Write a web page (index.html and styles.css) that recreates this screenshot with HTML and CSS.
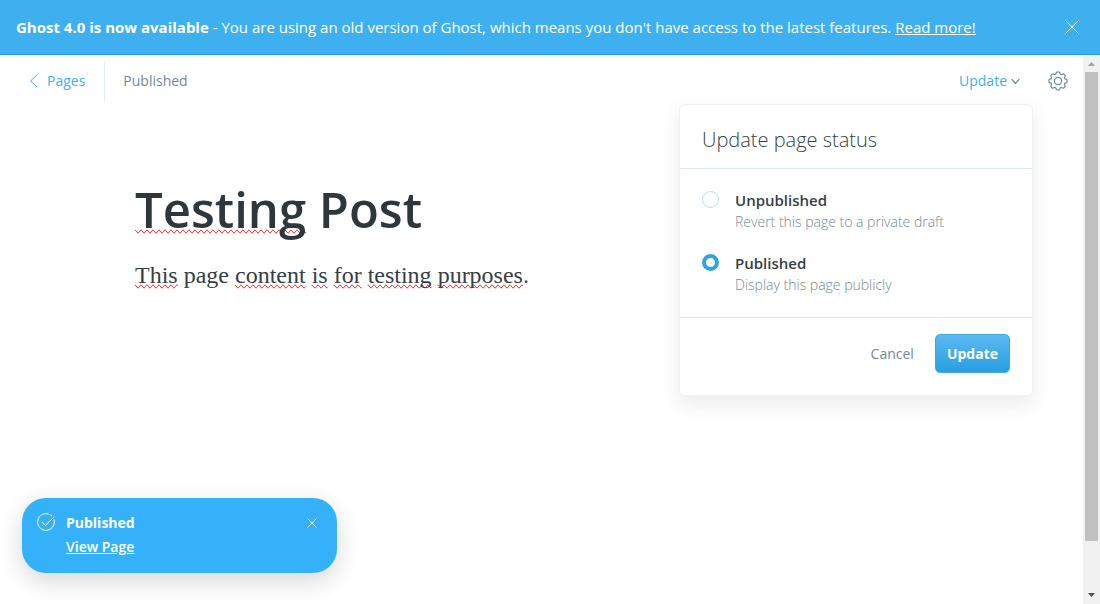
FILE: index.html
```
<!DOCTYPE html>
<html lang="en">
<head>
<meta charset="utf-8">
<meta name="viewport" content="width=device-width, initial-scale=1">
<title>Testing Post - Ghost</title>
<link rel="stylesheet" href="styles.css">
</head>
<body>
<aside class="banner">
  <p class="banner-text"><strong>Ghost 4.0 is now available</strong> - You are using an old version of Ghost, which means you don't have access to the latest features. <a href="#upgrade">Read more!</a></p>
  <button class="icon-button" type="button" aria-label="Dismiss">
    <svg width="14" height="14" viewBox="0 0 14 14" fill="none" stroke="currentColor" stroke-linecap="round"><path d="M.8.8l12.4 12.4M13.2.8L.8 13.2"/></svg>
  </button>
</aside>
<div class="workspace">
  <div class="editor">
    <header class="toolbar">
      <a class="back" href="#pages">
        <svg width="9" height="14" viewBox="0 0 9 14" fill="none" stroke="currentColor" stroke-linecap="round" stroke-linejoin="round"><path d="M8 1L1.5 7L8 13"/></svg>
        Pages
      </a>
      <span class="state">Published</span>
      <div class="publish">
        <button class="publish-toggle" type="button" aria-expanded="true">Update
          <svg width="9" height="7" viewBox="0 0 9 7" fill="none" stroke="#738a94" stroke-width="1.2" stroke-linecap="round" stroke-linejoin="round"><path d="M1 1.5l3.5 4L8 1.5"/></svg>
        </button>
        <form class="menu">
          <h2 class="menu-title">Update page status</h2>
          <div class="options">
            <label class="option">
              <input type="radio" name="status">
              <span><span class="option-name">Unpublished</span><span class="option-note">Revert this page to a private draft</span></span>
            </label>
            <label class="option">
              <input type="radio" name="status" checked>
              <span><span class="option-name">Published</span><span class="option-note">Display this page publicly</span></span>
            </label>
          </div>
          <footer class="menu-actions">
            <button class="cancel" type="button">Cancel</button>
            <button class="submit" type="button">Update</button>
          </footer>
        </form>
      </div>
      <button class="icon-button settings" type="button" aria-label="Settings">
        <svg width="20" height="20" viewBox="0 0 20 20" fill="none" stroke="currentColor" stroke-width="1.2" stroke-linejoin="round"><circle cx="10" cy="10" r="3.6"/><path d="M7.9 2.9L8.4 1.2Q10 .6 11.6 1.2L12.1 2.9Q12.7 3.8 13.6 3.5L15.2 2.7Q16.7 3.4 17.3 4.8L16.5 6.4Q16.2 7.3 17.1 7.9L18.8 8.4Q19.4 10 18.8 11.6L17.1 12.1Q16.2 12.7 16.5 13.6L17.3 15.2Q16.6 16.7 15.2 17.3L13.6 16.5Q12.7 16.2 12.1 17.1L11.6 18.8Q10 19.4 8.4 18.8L7.9 17.1Q7.3 16.2 6.4 16.5L4.8 17.3Q3.3 16.6 2.7 15.2L3.5 13.6Q3.8 12.7 2.9 12.1L1.2 11.6Q.6 10 1.2 8.4L2.9 7.9Q3.8 7.3 3.5 6.4L2.7 4.8Q3.4 3.3 4.8 2.7L6.4 3.5Q7.3 3.8 7.9 2.9Z"/></svg>
      </button>
    </header>
    <main class="post">
      <h1 class="post-title"><span class="misspelt">Testing</span> Post</h1>
      <p class="post-body"><span class="misspelt">This</span> page <span class="misspelt">content</span> <span class="misspelt">is</span> <span class="misspelt">for</span> <span class="misspelt">testing</span> <span class="misspelt">purposes</span>.</p>
    </main>
    <section class="toast">
      <svg class="toast-icon" width="18" height="18" viewBox="0 0 18 18" fill="none" stroke="currentColor" stroke-linecap="round" stroke-linejoin="round"><path d="M17.200 7A8.4 8.4 0 1 1 14.500 2.600"/><path d="M5 9.200l3.300 3.300L17 4"/></svg>
      <div class="toast-text"><strong>Published</strong><a href="#view">View Page</a></div>
      <button class="icon-button" type="button" aria-label="Close">
        <svg width="10" height="10" viewBox="0 0 10 10" fill="none" stroke="currentColor" stroke-linecap="round"><path d="M.8.8l8.4 8.4M9.2.8L.8 9.2"/></svg>
      </button>
    </section>
  </div>
  <div class="scrollbar" aria-hidden="true">
    <svg width="17" height="17" viewBox="0 0 17 17"><path d="M5 11h7L8.500 7z" fill="#a3a3a3"/></svg>
    <div class="track"><div class="thumb"></div></div>
    <svg width="17" height="17" viewBox="0 0 17 17"><path d="M5 6h7L8.500 10z" fill="#505050"/></svg>
  </div>
</div>
</body>
</html>
```
FILE: styles.css
```
* { box-sizing: border-box; }

body {
  margin: 0;
  height: 100vh;
  display: flex;
  flex-direction: column;
  overflow: hidden;
  font: 14px/20px "Open Sans", "Noto Sans", sans-serif;
  color: #343f44;
  background: #fff;
}

h1, h2, p { margin: 0; }
button { padding: 0; border: 0; background: none; font: inherit; color: inherit; cursor: pointer; }
svg { display: block; flex: none; }

.icon-button { display: flex; }

.banner {
  display: flex;
  align-items: center;
  justify-content: space-between;
  padding: 16px 21px 16px 16px;
  border-bottom: 1px solid #1d9eea;
  background: #3eb0ef;
  color: #fff;
}
.banner-text { font-size: 15px; line-height: 22px; }
.banner-text a { color: inherit; }

.workspace { flex: 1; display: flex; min-height: 0; }
.editor { flex: 1; position: relative; min-width: 0; }

.toolbar {
  display: flex;
  align-items: center;
  padding: 6px 15px 0 29px;
}
.back {
  display: flex;
  align-items: center;
  gap: 9px;
  height: 40px;
  padding-right: 19px;
  border-right: 1px solid #dfebf2;
  color: #3eb0ef;
  text-decoration: none;
}
.state { padding-left: 18px; color: #738a94; }
.publish { position: relative; margin-left: auto; margin-right: 28px; }
.publish-toggle { display: flex; align-items: center; gap: 4px; color: #3eb0ef; }
.settings { color: #738a94; }

.menu {
  position: absolute;
  top: 33px;
  right: -13px;
  width: 354px;
  border: 1px solid #eef1f3;
  border-radius: 5px;
  background: #fff;
  box-shadow: 0 8px 20px rgba(50, 63, 68, .1);
}
.menu-title {
  padding: 22px 22px 15px;
  border-bottom: 1px solid #dfebf2;
  font-size: 20px;
  line-height: 26px;
  font-weight: 300;
}
.options {
  display: flex;
  flex-direction: column;
  gap: 21px;
  padding: 21px 22px 22px;
}
.option { display: flex; gap: 16px; }
.option input {
  appearance: none;
  flex: none;
  width: 17px;
  height: 17px;
  margin: 1px 0 0;
  border: 1px solid #b9dcf0;
  border-radius: 50%;
  background: #fff;
}
.option input:checked { border: 4px solid #31a3e3; }
.option-name, .option-note { display: block; }
.option-name { font-size: 15px; line-height: 21px; font-weight: 600; }
.option-note { line-height: 21px; font-weight: 300; color: #738a94; }
.menu-actions {
  display: flex;
  align-items: center;
  justify-content: flex-end;
  gap: 21px;
  padding: 16px 22px 22px;
  border-top: 1px solid #dfebf2;
}
.cancel { color: #738a94; }
.submit {
  padding: 9px 11px;
  border: 1px solid #3fa9e6;
  border-radius: 5px;
  background: linear-gradient(#5bb9ef, #279fe2);
  color: #fff;
  line-height: 19px;
  font-weight: 700;
}

.post { padding: 74px 135px; }
.post-title {
  font-size: 49px;
  line-height: 68px;
  font-weight: 600;
  color: #2d373c;
}
.post-body {
  padding-top: 14px;
  font: 24px/36px "Liberation Serif", Georgia, serif;
}
.misspelt { text-decoration-line: spelling-error; }

.toast {
  position: absolute;
  left: 22px;
  bottom: 31px;
  width: 315px;
  display: flex;
  align-items: flex-start;
  padding: 15px 20px 16px 15px;
  border-radius: 24px;
  background: #35b1f9;
  color: #fff;
  box-shadow: 0 8px 24px rgba(0, 0, 0, .16);
}
.toast-text {
  flex: 1;
  display: flex;
  flex-direction: column;
  align-items: flex-start;
  gap: 4px;
  padding-left: 11px;
}
.toast-text a { color: inherit; font-weight: 600; }
.toast .icon-button { padding-top: 5px; }

.scrollbar {
  display: flex;
  flex-direction: column;
  width: 17px;
  background: #f1f1f1;
}
.track { flex: 1; padding: 0 2px; }
.thumb { height: 91%; background: #c1c1c1; }
```
